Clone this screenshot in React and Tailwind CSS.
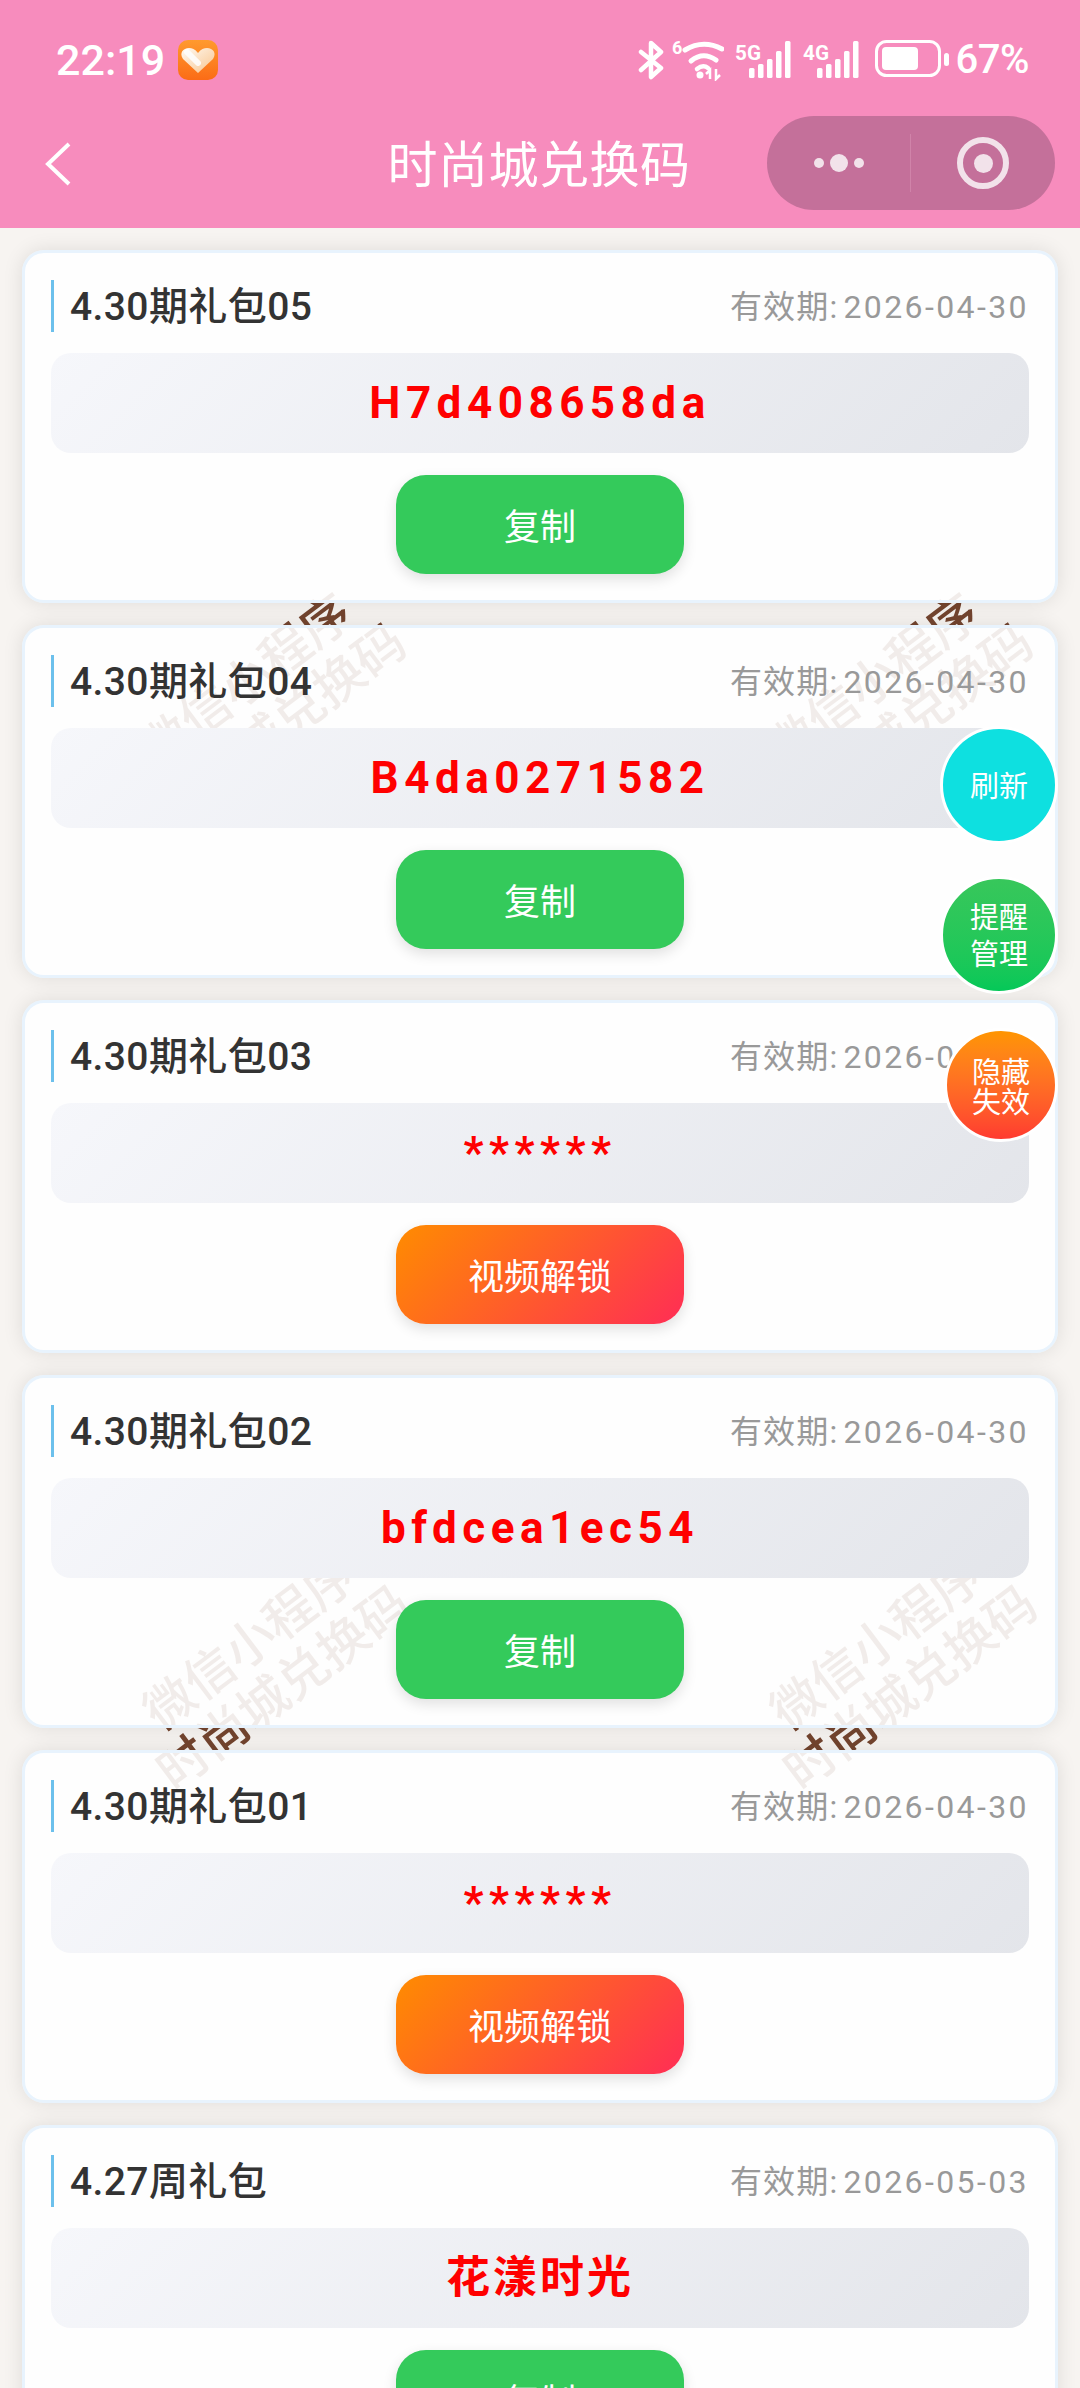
const CJK = '"Noto Sans CJK SC", sans-serif';

function Heart() {
  return (
    <svg width="42" height="42" viewBox="0 0 42 42" className="shrink-0">
      <defs>
        <linearGradient id="hb" x1="0" y1="0" x2="0" y2="1">
          <stop offset="0" stopColor="#ff9a2e" />
          <stop offset="1" stopColor="#fb6c16" />
        </linearGradient>
        <linearGradient id="hh" x1="0" y1="0" x2="1" y2="1">
          <stop offset="0" stopColor="#fffaf3" />
          <stop offset="1" stopColor="#f8c48c" />
        </linearGradient>
      </defs>
      <rect x="1" y="1" width="40" height="40" rx="10" fill="url(#hb)" />
      <path d="M21 34 L6 20 C2 14 6 9 12 9 C15 9 18 10 21 14 C24 10 27 9 30 9 C36 9 40 14 36 20 Z" fill="url(#hh)" />
      <path d="M10 13 L21 24" stroke="#ffffff" strokeWidth="6" strokeLinecap="round" opacity=".85" />
    </svg>
  );
}

function Signal({ label }) {
  return (
    <svg width="58" height="40" viewBox="0 0 58 40" fill="white" className="shrink-0">
      <text x="0" y="20" fontSize="21" fontWeight="700" fontFamily="Roboto, sans-serif" textLength="26" lengthAdjust="spacingAndGlyphs">{label}</text>
      <rect x="14" y="28" width="5.5" height="10" rx="1.5" />
      <rect x="23" y="24" width="5.5" height="14" rx="1.5" />
      <rect x="32" y="19" width="5.5" height="19" rx="1.5" />
      <rect x="41" y="11" width="5.5" height="27" rx="1.5" />
      <rect x="50" y="1" width="5.5" height="37" rx="1.5" />
    </svg>
  );
}

function StatusBar() {
  return (
    <div className="h-[108px] flex items-center justify-between pl-[56px] pr-[51px] pt-[12px] text-white">
      <div className="flex items-center gap-[12px]">
        <span className="text-[43px] font-medium leading-none" style={{ fontFamily: 'Roboto, sans-serif' }}>22:19</span>
        <Heart />
      </div>
      <div className="flex items-center">
        <svg width="28" height="40" viewBox="0 0 28 40" fill="none" stroke="white" strokeWidth="4.5" strokeLinejoin="round" strokeLinecap="round" className="shrink-0 mr-[6px]">
          <path d="M3 12 L23 28 L13 37 L13 3 L23 12 L3 30" />
        </svg>
        <svg width="52" height="42" viewBox="0 0 52 42" fill="none" stroke="white" strokeLinecap="round" className="shrink-0 mr-[11px]">
          <text x="0" y="15" fontSize="18" fontWeight="700" fill="white" stroke="none" fontFamily="Roboto, sans-serif">6</text>
          <path d="M13 11 Q31 0 50 10" strokeWidth="5" />
          <path d="M19 22 Q31 12 44 21" strokeWidth="5" />
          <path d="M25 30 Q31 25 36 29" strokeWidth="4.5" />
          <circle cx="28" cy="36" r="3.5" fill="white" stroke="none" />
          <path d="M38 40 L38 31 L34 35 M44 30 L44 40 L48 36" strokeWidth="2.5" strokeLinecap="butt" />
        </svg>
        <Signal label="5G" />
        <span className="w-[10px]" />
        <Signal label="4G" />
        <svg width="78" height="40" viewBox="0 0 78 40" fill="none" className="shrink-0 ml-[14px]">
          <rect x="1.5" y="1.5" width="63" height="34" rx="10" stroke="white" strokeWidth="3" />
          <rect x="7" y="7" width="36" height="23" rx="4" fill="white" />
          <rect x="69" y="13" width="5" height="13" rx="2.5" fill="white" />
        </svg>
        <span className="text-[40px] font-medium leading-none ml-[3px] tracking-[-0.5px]" style={{ fontFamily: 'Roboto, sans-serif' }}>67%</span>
      </div>
    </div>
  );
}

function NavBar() {
  return (
    <div className="relative h-[120px] flex items-center justify-center text-white">
      <svg width="26" height="44" viewBox="0 0 26 44" fill="none" stroke="white" strokeWidth="4" className="absolute left-[45px] top-[34px]">
        <path d="M24 2 L3 22 L24 42" />
      </svg>
      <span className="text-[50px] leading-none tracking-[0.5px] -translate-y-[7px] -translate-x-[1px]" style={{ fontFamily: CJK }}>时尚城兑换码</span>
      <div className="absolute left-[767px] top-[8px] w-[288px] h-[94px] rounded-[47px] bg-[#c4709a] flex items-center">
        <div className="w-[144px] h-[58px] border-r border-[#d083a9] flex items-center justify-center gap-[6px]">
          <span className="w-[10px] h-[10px] rounded-full bg-[#f2e2ea]" />
          <span className="w-[18px] h-[18px] rounded-full bg-[#f2e2ea]" />
          <span className="w-[10px] h-[10px] rounded-full bg-[#f2e2ea]" />
        </div>
        <div className="flex-1 flex items-center justify-center">
          <span className="w-[52px] h-[52px] rounded-full border-[6px] border-[#f2e2ea] flex items-center justify-center">
            <span className="w-[19px] h-[19px] rounded-full bg-[#f2e2ea]" />
          </span>
        </div>
      </div>
    </div>
  );
}

function Card({ name, date, code, locked }) {
  const isCjk = /[\u4e00-\u9fff]/.test(code);
  return (
    <div className="mb-[22px] border-[3px] border-[#e8f3fd] rounded-[22px] bg-white/90 px-[26px] pt-[27px] pb-[26px] shadow-[0_0_20px_rgba(0,0,0,0.1)]">
      <div className="h-[52px] flex items-center justify-between border-l-[3px] border-[#6cc0ec] pl-[16px] pt-[2px]">
        <span className="text-[39px] font-medium leading-none text-[#333333] tracking-[0.4px]" style={{ fontFamily: `Roboto, ${CJK}` }}>{name}</span>
        <span className="text-[32px] leading-none text-[#999999] tracking-[1.2px]" style={{ fontFamily: `Roboto, ${CJK}` }}>
          有效期:<span className="ml-[5px] tracking-[2.4px]">{date}</span>
        </span>
      </div>
      <div className="mt-[21px] h-[100px] rounded-[20px] bg-[linear-gradient(135deg,#f6f7fb,#e3e5ea)] flex items-center justify-center">
        <span className={`font-bold text-[#ff0000] text-[44px] leading-none ${isCjk ? 'tracking-[3px]' : 'tracking-[5.5px]'}`} style={{ fontFamily: `Roboto, ${CJK}` }}>{code}</span>
      </div>
      <div className="mt-[22px] flex justify-center">
        <div
          className={`w-[288px] h-[99px] pb-[2px] rounded-[30px] flex items-center justify-center text-white text-[36px] leading-none shadow-[0_5px_14px_rgba(0,0,0,0.12)] ${locked ? 'bg-[linear-gradient(135deg,#ff8c00,#ff2d55)]' : 'bg-[#34ca5b]'}`}
          style={{ fontFamily: CJK }}
        >
          {locked ? '视频解锁' : '复制'}
        </div>
      </div>
    </div>
  );
}

function Watermark({ x, y }) {
  return (
    <div
      className="absolute w-[420px] -rotate-[37deg] flex flex-col items-center text-[50px] leading-[56px] font-medium text-[#74452f]"
      style={{ left: x, top: y, fontFamily: CJK }}
    >
      <span>微信小程序</span>
      <span>时尚城兑换码</span>
    </div>
  );
}

const cards = [
  { name: '4.30期礼包05', date: '2026-04-30', code: 'H7d408658da' },
  { name: '4.30期礼包04', date: '2026-04-30', code: 'B4da0271582' },
  { name: '4.30期礼包03', date: '2026-04-30', code: '******', locked: true },
  { name: '4.30期礼包02', date: '2026-04-30', code: 'bfdcea1ec54' },
  { name: '4.30期礼包01', date: '2026-04-30', code: '******', locked: true },
  { name: '4.27周礼包', date: '2026-05-03', code: '花漾时光' },
];

const floats = [
  { top: 726, size: 118, cls: 'bg-[#0ee0e0]', lines: ['刷新'], lh: 'leading-[36px] pb-[3px]' },
  { top: 876, size: 118, cls: 'bg-gradient-to-b from-[#37c75b] to-[#04c858]', lines: ['提醒', '管理'], lh: 'leading-[37px] pb-[2px]' },
  { top: 1028, size: 114, cls: 'bg-gradient-to-b from-[#ff9500] to-[#ff3a30]', lines: ['隐藏', '失效'], lh: 'leading-[30px]' },
];

export default function App() {
  return (
    <div className="relative w-[1080px] h-[2388px] overflow-hidden bg-[#f7f4f1]" style={{ fontFamily: CJK }}>
      <Watermark x={50} y={644} />
      <Watermark x={677} y={644} />
      <Watermark x={54} y={1606} />
      <Watermark x={681} y={1606} />
      <div className="relative">
        <header className="bg-[#f78cbd] relative z-10">
          <StatusBar />
          <NavBar />
        </header>
        <main className="pt-[22px] pl-[22px] pr-[22px]">
          {cards.map((c, i) => (
            <Card key={i} {...c} />
          ))}
        </main>
      </div>
      {floats.map((f, i) => (
        <div
          key={i}
          className={`absolute right-[22px] rounded-full border-[3px] border-white flex flex-col items-center justify-center text-white text-[29px] ${f.lh} ${f.cls}`}
          style={{ top: f.top, width: f.size, height: f.size }}
        >
          {f.lines.map((l) => (
            <span key={l}>{l}</span>
          ))}
        </div>
      ))}
    </div>
  );
}
